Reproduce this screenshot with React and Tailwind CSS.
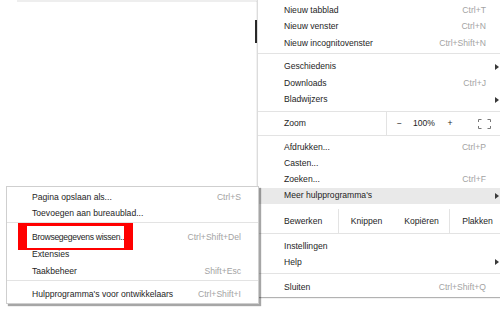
import React from 'react'

const FONT = { fontFamily: '"Liberation Sans", Arial, sans-serif' }

/** Small black submenu arrow. */
const Arrow = () => (
  <span className="block w-0 h-0 border-y-[3px] border-y-transparent border-l-[4px] border-l-[#3a3a3a]" />
)

/** One row of the main Chrome menu. */
const MainRow = ({ label, shortcut, arrow, h = 'h-[16.5px]', active }) => (
  <div className={`flex items-center ${h} ${active ? 'bg-[#e9e9e9]' : ''}`}>
    <span className="flex-1 pl-[26px] text-[#1e1e1e]">{label}</span>
    {shortcut && <span className="text-[#a3a3a3]">{shortcut}</span>}
    <span className="w-[30px] pl-[9px] flex items-center">{arrow && <Arrow />}</span>
  </div>
)

/** One row of the submenu "Meer hulpprogramma's". */
const SubRow = ({ label, shortcut, h = 'h-[16px]', tight }) => (
  <div className={`flex items-center ${h} pl-[25px] pr-[17px]`}>
    <span className={`flex-1 text-[#1e1e1e] ${tight ? 'tracking-[-0.3px]' : ''}`}>{label}</span>
    {shortcut && <span className="text-[#a3a3a3]">{shortcut}</span>}
  </div>
)

const Sep = ({ mt, mb }) => <div className={`h-px bg-[#e3e3e3] ${mt} ${mb}`} />

const App = () => {
  return (
    <div className="relative w-[500px] h-[312px] overflow-hidden bg-white text-[8.6px] leading-none" style={FONT}>
      {/* page behind the menu */}
      <div className="absolute left-[17px] top-0 w-[240px] h-[2px] bg-[#eeeeee]" />
      <div className="absolute left-[255px] top-[20px] w-[2px] h-[23px] bg-[#2b2b2b]" />

      {/* main menu */}
      <div className="absolute left-[257px] top-0 w-[259px] h-[297px] bg-white border-l border-[#dcdcdc] pt-[2px] shadow-[0_1px_1px_rgba(0,0,0,0.3)]">
        <MainRow label="Nieuw tabblad" shortcut="Ctrl+T" />
        <MainRow label="Nieuw venster" shortcut="Ctrl+N" />
        <MainRow label="Nieuw incognitovenster" shortcut="Ctrl+Shift+N" />
        <Sep mt="mt-[1.5px]" mb="mb-[4.5px]" />
        <MainRow label="Geschiedenis" arrow />
        <MainRow label="Downloads" shortcut="Ctrl+J" />
        <MainRow label="Bladwijzers" arrow />
        <Sep mt="mt-[3px]" />
        <div className="flex items-center h-[23px]">
          <span className="w-[128px] pl-[26px] text-[#1e1e1e]">Zoom</span>
          <span className="w-px h-full bg-[#e3e3e3]" />
          <span className="w-[24px] text-center text-[#1e1e1e]">−</span>
          <span className="w-[26px] text-center text-[#1e1e1e]">100%</span>
          <span className="w-[26px] text-center text-[#1e1e1e]">+</span>
          <span className="w-[8px]" />
          <span className="w-[26px] flex justify-center">
            <svg width="13" height="10" viewBox="0 0 13 10" fill="none" stroke="#777" strokeWidth="1">
              <path d="M0.5 3V0.5H3.5M9.5 0.5H12.5V3M12.5 7V9.5H9.5M3.5 9.5H0.5V7" />
            </svg>
          </span>
        </div>
        <Sep mb="mb-[3.5px]" />
        <MainRow label="Afdrukken..." shortcut="Ctrl+P" h="h-[16px]" />
        <MainRow label="Casten..." h="h-[16px]" />
        <MainRow label="Zoeken..." shortcut="Ctrl+F" h="h-[16px]" />
        <MainRow label="Meer hulpprogramma's" arrow h="h-[16px]" active />
        <div className="flex items-center h-[24px] mt-[5.5px]">
          <span className="w-[80px] pl-[26px] text-[#1e1e1e]">Bewerken</span>
          <span className="w-px h-full bg-[#e3e3e3]" />
          <span className="w-[55px] text-center text-[#1e1e1e]">Knippen</span>
          <span className="w-[55px] text-center text-[#1e1e1e]">Kopiëren</span>
          <span className="w-px h-full bg-[#e3e3e3]" />
          <span className="w-[55px] text-center text-[#1e1e1e]">Plakken</span>
        </div>
        <Sep mb="mb-[4px]" />
        <MainRow label="Instellingen" h="h-[16px]" />
        <MainRow label="Help" arrow h="h-[16px]" />
        <Sep mt="mt-[2.5px]" mb="mb-[6px]" />
        <MainRow label="Sluiten" shortcut="Ctrl+Shift+Q" h="h-[16px]" />
      </div>

      {/* submenu */}
      <div className="absolute left-[6px] top-[186px] w-[253px] h-[118px] bg-white border border-[#cfcfcf] pt-[2px] shadow-[2px_2px_1px_rgba(0,0,0,0.35)]">
        <SubRow label="Pagina opslaan als..." shortcut="Ctrl+S" />
        <SubRow label="Toevoegen aan bureaublad..." />
        <Sep mt="mt-[1px]" mb="mb-[5.5px]" />
        <SubRow label="Browsegegevens wissen..." shortcut="Ctrl+Shift+Del" h="h-[17px]" tight />
        <SubRow label="Extensies" h="h-[17px]" />
        <SubRow label="Taakbeheer" shortcut="Shift+Esc" h="h-[17px]" />
        <Sep mt="mt-[0.5px]" mb="mb-[5px]" />
        <SubRow label="Hulpprogramma's voor ontwikkelaars" shortcut="Ctrl+Shift+I" />
      </div>

      {/* red annotation box */}
      <div className="absolute left-[18px] top-[223px] w-[115px] h-[27px] border-x-[9px] border-t-[3px] border-b-[2.5px] border-[#ff0000]" />
    </div>
  )
}

export default App
